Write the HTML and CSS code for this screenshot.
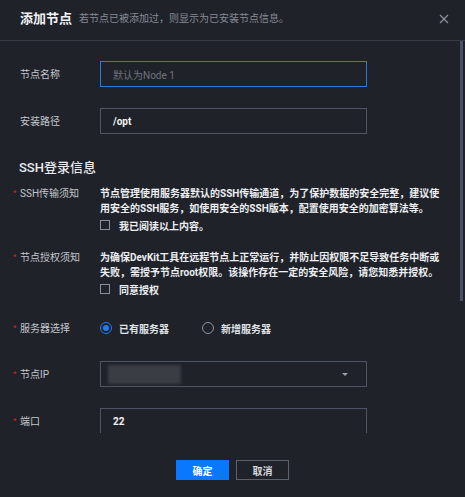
FILE: index.html
```html
<!DOCTYPE html>
<html lang="zh-CN">
<head>
<meta charset="utf-8">
<title>添加节点</title>
<link rel="stylesheet" href="styles.css">
</head>
<body>
<div class="dialog">
  <header class="header">
    <h1 class="title">添加节点</h1>
    <span class="subtitle">若节点已被添加过，则显示为已安装节点信息。</span>
    <svg class="close" width="10" height="10" viewBox="0 0 10 10"><path d="M1 1L9 9M9 1L1 9" stroke="#8c929c" stroke-width="1.2" fill="none"/></svg>
  </header>
  <div class="body">
    <div class="scroll">
      <div class="row first">
        <label class="label">节点名称</label>
        <div class="input focus"><span class="placeholder">默认为Node 1</span></div>
      </div>
      <div class="row gap21">
        <label class="label">安装路径</label>
        <div class="input"><span class="value">/opt</span></div>
      </div>
      <h2 class="section">SSH登录信息</h2>
      <div class="notice">
        <label class="label req">SSH传输须知</label>
        <div class="notice-body">
          <p class="text">节点管理使用服务器默认的SSH传输通道，为了保护数据的安全完整，建议使<br>用安全的SSH服务，如使用安全的SSH版本，配置使用安全的加密算法等。</p>
          <div class="check"><span class="box"></span><span>我已阅读以上内容。</span></div>
        </div>
      </div>
      <div class="notice second">
        <label class="label req">节点授权须知</label>
        <div class="notice-body">
          <p class="text">为确保DevKit工具在远程节点上正常运行，并防止因权限不足导致任务中断或<br>失败，需授予节点root权限。该操作存在一定的安全风险，请您知悉并授权。</p>
          <div class="check"><span class="box"></span><span>同意授权</span></div>
        </div>
      </div>
      <div class="radio-row">
        <label class="label req">服务器选择</label>
        <div class="radios">
          <span class="radio on"><span class="dot"></span></span><span class="rlabel">已有服务器</span>
          <span class="radio off"></span><span class="rlabel">新增服务器</span>
        </div>
      </div>
      <div class="row gap25">
        <label class="label req">节点IP</label>
        <div class="input select"><span class="blur"></span><span class="caret"></span></div>
      </div>
      <div class="row gap21">
        <label class="label req">端口</label>
        <div class="input"><span class="value">22</span></div>
      </div>
    </div>
    <div class="thumb"></div>
  </div>
  <footer class="footer">
    <button class="btn primary">确定</button>
    <button class="btn">取消</button>
  </footer>
</div>
</body>
</html>
```
FILE: styles.css
```css
* { box-sizing: border-box; }
html, body { margin: 0; padding: 0; }
body {
  background: #1f2229;
  font-family: Roboto, "Noto Sans CJK SC", sans-serif;
  color: #e6e8eb;
  width: 465px;
  height: 497px;
  overflow: hidden;
}
.dialog {
  display: flex;
  flex-direction: column;
  height: 497px;
}
.header {
  height: 41px;
  border-bottom: 1px solid #373c45;
  display: flex;
  align-items: center;
  padding: 0 16px 3px 20px;
}
.title {
  margin: 0;
  font-size: 13px;
  font-weight: 700;
  color: #f2f3f5;
  line-height: 18px;
}
.subtitle {
  margin-left: 7px;
  font-size: 10px;
  color: #868b95;
  line-height: 14px;
  padding-top: 1px;
}
.close { margin-left: auto; margin-top: 1px; }
.body {
  position: relative;
  height: 392px;
  overflow: hidden;
}
.scroll { padding: 20px 0 160px 20px; }
.thumb {
  position: absolute;
  right: 2px;
  top: 0;
  width: 3px;
  height: 260px;
  background: #4a5261;
}
.label {
  width: 80px;
  flex: none;
  font-size: 10px;
  color: #c3c7cd;
  line-height: 15px;
  position: relative;
}
.req::before {
  content: "*";
  position: absolute;
  left: -7px;
  top: -1px;
  color: #d9262c;
  font-size: 8px;
}
.row {
  display: flex;
  align-items: center;
}
.gap21 { margin-top: 21px; }
.gap25 { margin-top: 25px; }
.input {
  width: 267px;
  height: 26px;
  border: 1px solid #4e5563;
  display: flex;
  align-items: center;
  padding-left: 12px;
  font-size: 10px;
  position: relative;
}
.input.focus { border-color: #2e7ad6; }
.placeholder { color: #6e737c; }
.value { color: #f2f3f5; font-weight: 700; }
.select { padding-left: 7px; }
.blur {
  width: 73px;
  height: 19px;
  background: #3a3d43;
  filter: blur(1.5px);
}
.caret {
  position: absolute;
  right: 18px;
  top: 11px;
  width: 0;
  height: 0;
  border-left: 3px solid transparent;
  border-right: 3px solid transparent;
  border-top: 3px solid #9ba1ab;
}
.section {
  margin: 24px 0 0 -1px;
  font-size: 13px;
  font-weight: 500;
  line-height: 20px;
  color: #e8eaed;
}
.notice {
  display: flex;
  margin-top: 8px;
}
.notice.second { margin-top: 17px; }
.notice-body { font-size: 10px; }
.text {
  margin: 0;
  line-height: 15px;
  color: #eceef1;
  font-weight: 700;
  white-space: nowrap;
}
.check {
  display: flex;
  align-items: center;
  height: 16px;
  margin-top: 1px;
  font-weight: 700;
  color: #eceef1;
}
.box {
  width: 10px;
  height: 10px;
  border: 1px solid #8a909a;
  margin-right: 9px;
}
.radio-row {
  display: flex;
  align-items: center;
  margin-top: 23px;
  height: 16px;
}
.radios {
  display: flex;
  align-items: center;
  font-size: 10px;
}
.radio {
  width: 12px;
  height: 12px;
  border-radius: 50%;
  display: flex;
  align-items: center;
  justify-content: center;
}
.radio.on { border: 1.5px solid #1c7ef2; }
.radio.on .dot { width: 6px; height: 6px; border-radius: 50%; background: #1c7ef2; }
.radio.off { border: 1px solid #8d939d; margin-left: 33px; }
.rlabel {
  margin-left: 7px;
  color: #dfe2e6;
  font-weight: 700;
}
.footer {
  flex: 1;
  display: flex;
  justify-content: center;
  gap: 7px;
  padding-top: 27px;
}
.btn {
  width: 53px;
  height: 20px;
  border: 1px solid #5b626e;
  background: transparent;
  color: #d6d9de;
  font-family: Roboto, "Noto Sans CJK SC", sans-serif;
  font-size: 10px;
  font-weight: 700;
  padding: 0;
}
.btn.primary {
  background: #0a77ff;
  border-color: #0a77ff;
  color: #ffffff;
}
```
